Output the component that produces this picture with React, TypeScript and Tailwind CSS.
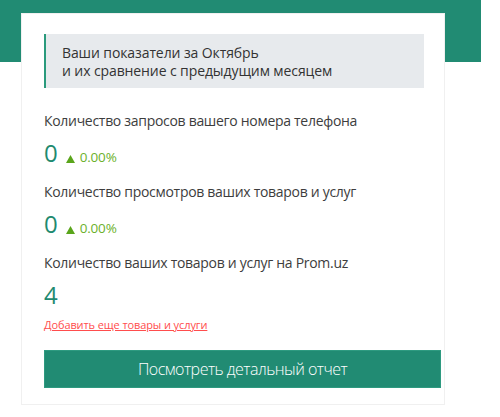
import React from "react";

const font = { fontFamily: '"Open Sans", "Noto Sans", sans-serif' };

function UpTriangle() {
  return (
    <svg width="9" height="8" viewBox="0 0 9 8" className="mr-[5px] self-center translate-y-[2px]">
      <path d="M4.5 0 L9 8 L0 8 Z" fill="#5aa51b" />
    </svg>
  );
}

function Metric({ label, value, delta }: { label: string; value: string; delta?: string }) {
  return (
    <div>
      <div className="text-[14px] leading-[20px] tracking-[-0.3px] text-[#3d3d3d]">{label}</div>
      <div className="mt-[6px] flex items-baseline">
        <span className="text-[24px] font-medium leading-[32px] text-[#1f8a70]">{value}</span>
        {delta && (
          <span className="ml-[8px] flex items-baseline text-[13.5px] tracking-[-0.2px] text-[#6cb12c]">
            <UpTriangle />
            {delta}
          </span>
        )}
      </div>
    </div>
  );
}

export default function App() {
  return (
    <div className="relative h-[417px] w-[500px] bg-white" style={font}>
      {/* brand band behind the card */}
      <div className="absolute left-0 top-0 h-[62px] w-[481px] bg-[#218b73]" />
      <div className="relative ml-[21px] w-[424px] pt-[13px]">
        <div className="border border-[#f0f0f0] bg-white pb-[16px] pl-[22px] pr-[3px] pt-[20px]">
          <div className="mr-[17px] border-l-2 border-[#2a9a7c] bg-[#e7eaed] pb-[8px] pl-[16px] pt-[10px] text-[14px] leading-[18px] tracking-[-0.1px] text-[#333]">
            Ваши показатели за Октябрь
            <br />
            и их сравнение с предыдущим месяцем
          </div>

          <div className="mt-[23px] flex flex-col gap-[13px]">
            <Metric label="Количество запросов вашего номера телефона" value="0" delta="0.00%" />
            <Metric label="Количество просмотров ваших товаров и услуг" value="0" delta="0.00%" />
            <Metric label="Количество ваших товаров и услуг на Prom.uz" value="4" />
          </div>

          <a
            href="#"
            className="mt-[6px] block text-[11px] leading-[16px] tracking-[-0.1px] text-[#ff4d4d] underline"
          >
            Добавить еще товары и услуги
          </a>

          <button className="mt-[17px] flex h-[38px] w-full items-center justify-center border border-[#2e9a80] bg-[#218b73] text-[16px] font-light tracking-[-0.5px] text-white">
            Посмотреть детальный отчет
          </button>
        </div>
      </div>
    </div>
  );
}
